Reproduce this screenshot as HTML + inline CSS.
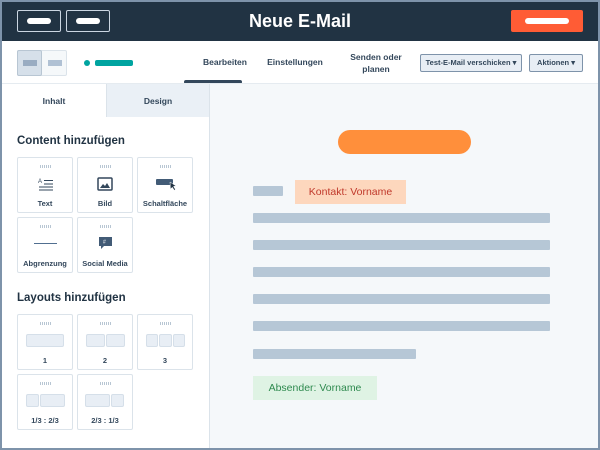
<!DOCTYPE html>
<html><head><style>
*{margin:0;padding:0;box-sizing:border-box}
body{width:600px;height:450px;overflow:hidden;font-family:"Liberation Sans",sans-serif;background:#7e93aa;position:relative}
.a{position:absolute}
.card{position:absolute;width:56px;height:56px;background:#fff;border:1px solid #dbe3ea;border-radius:2px}
.card .dots{position:absolute;left:22px;top:7px;width:12px;height:3px;background:repeating-linear-gradient(90deg,#b8c6d3 0 1px,transparent 1px 2px)}
.card .lb{position:absolute;left:0;right:0;top:41px;text-align:center;font-size:7.5px;font-weight:bold;color:#33475b}
.bx{position:absolute;background:#e8eef5;border:1px solid #d5dfe9;border-radius:2px;height:13px;top:19px}
.line{position:absolute;left:253px;height:10px;background:#b6c7d6;border-radius:1px}
.btn{position:absolute;background:#e8eef5;border:1px solid #7e93aa;border-radius:2px;font-size:7.5px;font-weight:bold;color:#33475b;text-align:center;line-height:16px;height:18px}
</style></head><body>
<div class="a" style="left:2px;top:2px;width:596px;height:446px;background:#fff"></div>
<!-- header -->
<div class="a" style="left:2px;top:2px;width:596px;height:39px;background:#213343"></div>
<div class="a" style="left:17px;top:10px;width:44px;height:22px;border:1px solid #cbd6e2;border-radius:2px"></div>
<div class="a" style="left:27px;top:18px;width:24px;height:6px;background:#fff;border-radius:3px"></div>
<div class="a" style="left:66px;top:10px;width:44px;height:22px;border:1px solid #cbd6e2;border-radius:2px"></div>
<div class="a" style="left:76px;top:18px;width:24px;height:6px;background:#fff;border-radius:3px"></div>
<div class="a" style="left:0;width:600px;top:10px;text-align:center;color:#fff;font-size:18px;font-weight:bold;line-height:22px">Neue E-Mail</div>
<div class="a" style="left:511px;top:10px;width:72px;height:22px;background:#ff5c35;border-radius:2px"></div>
<div class="a" style="left:525px;top:18px;width:44px;height:6px;background:#fff;border-radius:3px"></div>
<!-- toolbar -->
<div class="a" style="left:17px;top:50px;width:50px;height:26px;background:#f5f8fa;border:1px solid #dbe3ea;border-radius:2px"></div>
<div class="a" style="left:17px;top:50px;width:25px;height:26px;background:#d6e0ea;border:1px solid #b8c6d3;border-radius:2px"></div>
<div class="a" style="left:23px;top:60px;width:14px;height:6px;background:#99acc2"></div>
<div class="a" style="left:48px;top:60px;width:14px;height:6px;background:#b0c1d4"></div>
<div class="a" style="left:84px;top:60px;width:6px;height:6px;background:#00a4a0;border-radius:50%"></div>
<div class="a" style="left:95px;top:60px;width:38px;height:6px;background:#00a4a0;border-radius:2px"></div>
<div class="a" style="left:194px;top:57px;width:62px;text-align:center;font-size:8.5px;font-weight:bold;color:#33475b">Bearbeiten</div>
<div class="a" style="left:184px;top:80px;width:58px;height:4px;background:#33475b;border-radius:2px"></div>
<div class="a" style="left:262px;top:57px;width:66px;text-align:center;font-size:8.5px;font-weight:bold;color:#33475b">Einstellungen</div>
<div class="a" style="left:344px;top:51px;width:64px;text-align:center;font-size:8.5px;font-weight:bold;color:#33475b;line-height:12px">Senden oder<br>planen</div>
<div class="btn" style="left:420px;top:54px;width:102px">Test-E-Mail verschicken ▾</div>
<div class="btn" style="left:529px;top:54px;width:54px">Aktionen ▾</div>
<div class="a" style="left:2px;top:83px;width:596px;height:1px;background:#e5ebf0"></div>
<!-- tabs -->
<div class="a" style="left:2px;top:84px;width:104px;height:34px;background:#fff;font-size:8.5px;font-weight:bold;color:#33475b;text-align:center;line-height:34px">Inhalt</div>
<div class="a" style="left:106px;top:84px;width:103px;height:33px;background:#eaf0f6;border-left:1px solid #dbe3ea;font-size:8.5px;font-weight:bold;color:#33475b;text-align:center;line-height:34px">Design</div>
<div class="a" style="left:209px;top:84px;width:389px;height:364px;background:#f5f8fa;border-left:1px solid #dbe3ea"></div>
<!-- sidebar -->
<div class="a" style="left:17px;top:135px;font-size:11.5px;font-weight:bold;color:#213343">Content hinzufügen</div>
<div class="card" style="left:17px;top:157px"><div class="dots"></div>
<svg class="a" style="left:20px;top:19px" width="16" height="14"><text x="0" y="6" font-size="6" fill="#33475b" font-family="Liberation Sans">A</text><path d="M6 3.5h9M6 7h9M1 10h14M1 13h14" stroke="#33475b" stroke-width="1.1"/></svg><div class="lb">Text</div></div>
<div class="card" style="left:77px;top:157px"><div class="dots"></div>
<svg class="a" style="left:19px;top:19px" width="16" height="15"><rect x="1" y="1" width="14" height="12" rx="1" fill="none" stroke="#33475b" stroke-width="1.5"/><path d="M3 11l3-4 2 2 2-3 3 5z" fill="#33475b"/></svg><div class="lb">Bild</div></div>
<div class="card" style="left:137px;top:157px"><div class="dots"></div>
<svg class="a" style="left:17px;top:19px" width="22" height="14"><rect x="1" y="2" width="17" height="6" rx="1" fill="#425b76"/><path d="M15 5l6 4-2.5 .5 2 3-1.2 .8-2-3-1.8 1.8z" fill="#213343" stroke="#fff" stroke-width=".5"/></svg><div class="lb">Schaltfläche</div></div>
<div class="card" style="left:17px;top:217px"><div class="dots"></div><div class="a" style="left:16px;top:25px;width:23px;height:1px;background:#516f90"></div><div class="lb">Abgrenzung</div></div>
<div class="card" style="left:77px;top:217px"><div class="dots"></div>
<svg class="a" style="left:20px;top:18px" width="15" height="14"><path d="M1 1h13v9H6l-3 3v-3H1z" fill="#425b76"/><text x="5" y="7.5" font-size="5" fill="#fff" font-family="Liberation Sans">#</text></svg><div class="lb">Social Media</div></div>
<div class="a" style="left:17px;top:292px;font-size:11.5px;font-weight:bold;color:#213343">Layouts hinzufügen</div>
<div class="card" style="left:17px;top:314px"><div class="dots"></div><div class="bx" style="left:8px;width:38px"></div><div class="lb">1</div></div>
<div class="card" style="left:77px;top:314px"><div class="dots"></div><div class="bx" style="left:8px;width:19px"></div><div class="bx" style="left:28px;width:19px"></div><div class="lb">2</div></div>
<div class="card" style="left:137px;top:314px"><div class="dots"></div><div class="bx" style="left:8px;width:12px"></div><div class="bx" style="left:21px;width:13px"></div><div class="bx" style="left:35px;width:12px"></div><div class="lb">3</div></div>
<div class="card" style="left:17px;top:374px"><div class="dots"></div><div class="bx" style="left:8px;width:13px"></div><div class="bx" style="left:22px;width:25px"></div><div class="lb">1/3 : 2/3</div></div>
<div class="card" style="left:77px;top:374px"><div class="dots"></div><div class="bx" style="left:7px;width:25px"></div><div class="bx" style="left:33px;width:13px"></div><div class="lb">2/3 : 1/3</div></div>
<!-- canvas -->
<div class="a" style="left:338px;top:130px;width:133px;height:24px;background:#ff8f3b;border-radius:12px"></div>
<div class="a" style="left:253px;top:186px;width:30px;height:10px;background:#b6c7d6;border-radius:1px"></div>
<div class="a" style="left:295px;top:180px;width:111px;height:24px;background:#fdd7bd;color:#c0392b;font-size:10.5px;text-align:center;line-height:24px">Kontakt: Vorname</div>
<div class="line" style="top:213px;width:297px"></div>
<div class="line" style="top:240px;width:297px"></div>
<div class="line" style="top:267px;width:297px"></div>
<div class="line" style="top:294px;width:297px"></div>
<div class="line" style="top:321px;width:297px"></div>
<div class="line" style="top:349px;width:163px"></div>
<div class="a" style="left:253px;top:376px;width:124px;height:24px;background:#dff3e4;color:#2f8a4f;font-size:10.5px;text-align:center;line-height:24px">Absender: Vorname</div>
</body></html>
